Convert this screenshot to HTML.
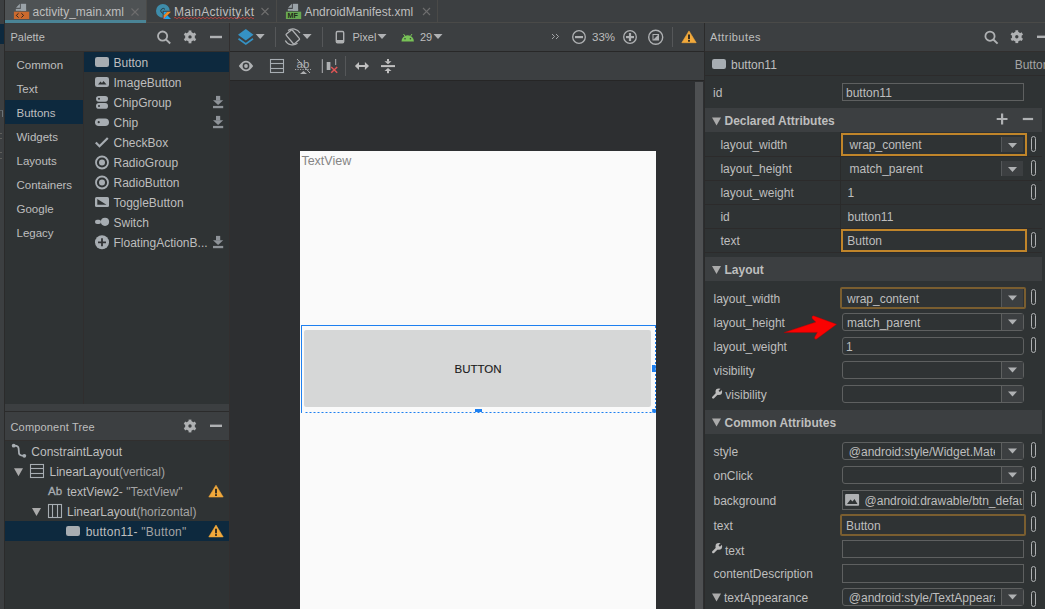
<!DOCTYPE html>
<html><head><meta charset="utf-8">
<style>
*{margin:0;padding:0;box-sizing:border-box}
html,body{width:1045px;height:609px;overflow:hidden;background:#2F3334;font-family:"Liberation Sans",sans-serif;font-size:12px;color:#BEBEBE}
.a{position:absolute}
.t{position:absolute;white-space:nowrap;line-height:1;font-size:12px}
.s{font-size:11px}
.g{color:#A4A4A4}
svg{position:absolute;overflow:visible}
.fld{position:absolute;border:1px solid #5E6060;border-radius:3px}
.sq{border-radius:0}
.org{position:absolute;border:2px solid #C0852A}
.dorg{position:absolute;border:2px solid #7A5E30;border-radius:2px}
.dd{position:absolute;width:22px;background:#3C3F41;border-left:1px solid #5E6060}
.pill{position:absolute;width:5px;height:16px;border:1.3px solid #AFB1B3;border-radius:3px;margin-top:-1px}
.ln{position:absolute;height:1px;background:#2C2B2B}
.clip{position:absolute;overflow:hidden;white-space:nowrap;line-height:14px;font-size:12px;margin-top:-1px}
</style></head><body>

<!-- left strip -->
<div class="a" style="left:0;top:0;width:4px;height:609px;background:#3C3F41"></div>
<div class="a" style="left:0;top:24px;width:4px;height:20px;background:#0D293E"></div>
<div class="a" style="left:4px;top:0;width:1px;height:609px;background:#2B2B2B"></div>
<div class="a" style="left:0;top:110px;width:3px;height:7px;border-right:1.5px solid #7F8A90;border-top:1px solid #6A7075;opacity:0.7"></div>
<div class="a" style="left:0;top:133px;width:2px;height:6px;border-top:1px solid #77756F;border-bottom:1.5px solid #77756F;opacity:0.6"></div>
<div class="a" style="left:0;top:152px;width:2px;height:7px;border-top:1px solid #77756F;border-bottom:1.5px solid #77756F;opacity:0.6"></div>

<!-- tab bar -->
<div class="a" style="left:5px;top:0;width:1040px;height:23px;background:#3C3F41;border-bottom:1px solid #4A4A48"></div>
<div class="a" style="left:5px;top:0;width:141px;height:23px;background:#4E5254"></div>
<div class="a" style="left:5px;top:20px;width:141px;height:3px;background:#4A8496"></div>
<div class="a" style="left:146px;top:0;width:1px;height:23px;background:#4A4A48"></div>
<div class="a" style="left:276px;top:0;width:1px;height:23px;background:#4A4A48"></div>
<div class="a" style="left:437px;top:0;width:1px;height:23px;background:#4A4A48"></div>
<div class="t" style="left:32.5px;top:5.7px">activity_main.xml</div>
<div class="t" style="left:174px;top:5.7px;letter-spacing:0.3px">MainActivity.kt</div>
<div class="t" style="left:304.4px;top:5.7px">AndroidManifest.xml</div>

<!-- palette -->
<div class="a" style="left:5px;top:23px;width:224px;height:28px;background:#3C3F41"></div>
<div class="t s" style="left:10.5px;top:32.4px">Palette</div>
<div class="a" style="left:5px;top:51px;width:224px;height:1px;background:#312F2E"></div>
<div class="a" style="left:705px;top:51px;width:340px;height:1px;background:#312F2E"></div>
<div class="a" style="left:5px;top:440px;width:224px;height:1px;background:#312F2E"></div>
<div class="a" style="left:229px;top:23px;width:1px;height:586px;background:#322F2F"></div>
<div class="a" style="left:83px;top:52px;width:1px;height:352px;background:#302E2E"></div>
<div class="a" style="left:5px;top:100px;width:78px;height:24px;background:#0D293E"></div>
<div class="a" style="left:84px;top:52px;width:145px;height:20px;background:#0D293E"></div>

<div class="t" style="left:16.5px;top:59.5px;font-size:11.5px">Common</div>
<div class="t" style="left:16.5px;top:83.5px;font-size:11.5px">Text</div>
<div class="t" style="left:16.5px;top:107.8px;font-size:11.5px">Buttons</div>
<div class="t" style="left:16.5px;top:131.5px;font-size:11.5px">Widgets</div>
<div class="t" style="left:16.5px;top:155.5px;font-size:11.5px">Layouts</div>
<div class="t" style="left:16.5px;top:179.5px;font-size:11.5px">Containers</div>
<div class="t" style="left:16.5px;top:203.5px;font-size:11.5px">Google</div>
<div class="t" style="left:16.5px;top:227.5px;font-size:11.5px">Legacy</div>

<div class="t" style="left:113.5px;top:56.8px">Button</div>
<div class="t" style="left:113.5px;top:76.8px">ImageButton</div>
<div class="t" style="left:113.5px;top:96.8px">ChipGroup</div>
<div class="t" style="left:113.5px;top:116.8px">Chip</div>
<div class="t" style="left:113.5px;top:136.8px">CheckBox</div>
<div class="t" style="left:113.5px;top:156.8px">RadioGroup</div>
<div class="t" style="left:113.5px;top:176.8px">RadioButton</div>
<div class="t" style="left:113.5px;top:196.8px">ToggleButton</div>
<div class="t" style="left:113.5px;top:216.8px">Switch</div>
<div class="t" style="left:113.5px;top:236.8px">FloatingActionB...</div>

<!-- component tree -->
<div class="a" style="left:5px;top:404px;width:224px;height:7px;background:#3C3F41"></div>
<div class="a" style="left:5px;top:411px;width:224px;height:1px;background:#2B2B2B"></div>
<div class="a" style="left:5px;top:412px;width:224px;height:28px;background:#3C3F41"></div>
<div class="t s" style="left:10.5px;top:421.6px;letter-spacing:0.17px">Component Tree</div>
<div class="a" style="left:5px;top:521px;width:224px;height:20px;background:#0D293E"></div>
<div class="t" style="left:31.3px;top:446.3px">ConstraintLayout</div>
<div class="t" style="left:49.5px;top:466.2px">LinearLayout<span class="g">(vertical)</span></div>
<div class="t" style="left:67px;top:486px">textView2- <span class="g">"TextView"</span></div>
<div class="t" style="left:67px;top:506px">LinearLayout<span class="g">(horizontal)</span></div>
<div class="t" style="left:85.7px;top:525.7px;letter-spacing:0.25px">button11- <span class="g">"Button"</span></div>

<!-- design toolbar -->
<div class="a" style="left:230px;top:23px;width:474px;height:29px;background:#3C3F41;border-bottom:1px solid #282828"></div>
<div class="a" style="left:230px;top:52px;width:474px;height:29px;background:#3C3F41;border-bottom:1px solid #262626"></div>
<div class="a" style="left:230px;top:81px;width:474px;height:528px;background:#2D2F31"></div>
<div class="a" style="left:695px;top:82px;width:8px;height:527px;background:#4E5052"></div>
<div class="a" style="left:704px;top:23px;width:1px;height:586px;background:#2B2B2B"></div>
<div class="t s" style="left:352.5px;top:32.3px">Pixel</div>
<div class="t s" style="left:420px;top:32.3px">29</div>
<div class="t" style="left:592px;top:32px;font-size:11.5px">33%</div>

<!-- phone -->
<div class="a" style="left:300px;top:151px;width:356px;height:458px;background:#FAFAFA"></div>
<div class="t" style="left:301.4px;top:155px;font-size:12.5px;color:#858585">TextView</div>
<svg width="1045" height="609" style="left:0;top:0">
<line x1="301" y1="325.5" x2="656" y2="325.5" stroke="#1E80F0" stroke-width="1"/>
<line x1="301.5" y1="325" x2="301.5" y2="413" stroke="#1E80F0" stroke-width="1"/>
<line x1="655.5" y1="326" x2="655.5" y2="413" stroke="#1E80F0" stroke-width="1" stroke-dasharray="2,2"/>
<line x1="305.5" y1="412.5" x2="656" y2="412.5" stroke="#1E80F0" stroke-width="1" stroke-dasharray="2,2"/>
<rect x="652" y="365" width="3.7" height="7" fill="#1E80F0"/>
<rect x="475" y="409" width="7" height="3" fill="#1E80F0"/>
<rect x="652.2" y="409" width="3.5" height="3.6" fill="#1E80F0"/>
</svg>
<div class="a" style="left:304px;top:330px;width:347px;height:77px;background:#D6D7D7;border-radius:2px"></div>
<div class="t" style="left:454.5px;top:364.2px;font-size:11.5px;color:#1A1A1A;-webkit-text-stroke:0.1px #1A1A1A">BUTTON</div>

<!-- attributes -->
<div class="a" style="left:705px;top:23px;width:340px;height:28px;background:#3C3F41"></div>
<div class="t s" style="left:710px;top:32.4px;letter-spacing:0.45px">Attributes</div>
<div class="ln" style="left:705px;top:75px;width:340px"></div>
<div class="t" style="left:731px;top:58.5px">button11</div>
<div class="t g" style="left:1014.7px;top:58.5px">Button</div>
<div class="t" style="left:713px;top:87px">id</div>
<div class="fld sq" style="left:842px;top:83px;width:182px;height:18px"></div>
<div class="t" style="left:846px;top:87px">button11</div>

<!-- declared attributes -->
<div class="a" style="left:705px;top:108px;width:337px;height:24px;background:#3C3F41"></div>
<div class="t" style="left:724.5px;top:114.5px;font-weight:bold">Declared Attributes</div>
<div class="ln" style="left:705px;top:156px;width:337px"></div>
<div class="ln" style="left:705px;top:180px;width:337px"></div>
<div class="ln" style="left:705px;top:204px;width:337px"></div>
<div class="ln" style="left:705px;top:228px;width:337px"></div>
<div class="ln" style="left:705px;top:252px;width:337px"></div>
<div class="a" style="left:840px;top:132px;width:1px;height:120px;background:#2A2B2B"></div>
<div class="t" style="left:720.4px;top:139px">layout_width</div>
<div class="t" style="left:720.4px;top:163px">layout_height</div>
<div class="t" style="left:720.4px;top:187px">layout_weight</div>
<div class="t" style="left:720.4px;top:211px">id</div>
<div class="t" style="left:720.4px;top:235px">text</div>

<div class="org" style="left:841px;top:133px;width:186px;height:23px"></div>
<div class="dd" style="left:1001px;top:137px;height:15px;border-left-color:#55585A"></div>
<div class="t" style="left:849.5px;top:138.5px">wrap_content</div>
<div class="dd" style="left:1001px;top:161px;height:15px;border-left-color:#55585A"></div>
<div class="t" style="left:849.5px;top:162.5px">match_parent</div>
<div class="t" style="left:847.5px;top:186.5px">1</div>
<div class="t" style="left:847.5px;top:210.5px">button11</div>
<div class="org" style="left:841px;top:229px;width:186px;height:23px"></div>
<div class="t" style="left:847.3px;top:234.8px">Button</div>
<div class="pill" style="left:1031px;top:137px"></div>
<div class="pill" style="left:1031px;top:161px"></div>
<div class="pill" style="left:1031px;top:185px"></div>
<div class="pill" style="left:1031px;top:233px"></div>

<!-- gap + layout -->
<div class="a" style="left:705px;top:257px;width:337px;height:24px;background:#3C3F41"></div>
<div class="t" style="left:724.5px;top:263.5px;font-weight:bold">Layout</div>

<div class="t" style="left:713.5px;top:292.8px">layout_width</div>
<div class="t" style="left:713.5px;top:316.8px">layout_height</div>
<div class="t" style="left:713.5px;top:340.8px">layout_weight</div>
<div class="t" style="left:713.5px;top:364.8px">visibility</div>
<div class="t" style="left:725.3px;top:388.8px">visibility</div>

<div class="dorg" style="left:840px;top:287px;width:186px;height:22px"></div>
<div class="dd" style="left:1001px;top:289px;height:18px;border-left-color:#55585A"></div>
<div class="t" style="left:847px;top:292.8px">wrap_content</div>
<div class="fld" style="left:842px;top:313px;width:182px;height:18px"></div>
<div class="dd" style="left:1001px;top:314px;height:16px"></div>
<div class="t" style="left:847px;top:316.8px">match_parent</div>
<div class="fld" style="left:842px;top:337px;width:182px;height:18px"></div>
<div class="t" style="left:846px;top:340.8px">1</div>
<div class="fld" style="left:842px;top:361px;width:182px;height:18px"></div>
<div class="dd" style="left:1001px;top:362px;height:16px"></div>
<div class="fld" style="left:842px;top:385px;width:182px;height:18px"></div>
<div class="dd" style="left:1001px;top:386px;height:16px"></div>
<div class="pill" style="left:1031px;top:290px"></div>
<div class="pill" style="left:1031px;top:314px"></div>
<div class="pill" style="left:1031px;top:338px"></div>

<!-- common attributes -->
<div class="a" style="left:705px;top:410px;width:337px;height:24px;background:#3C3F41"></div>
<div class="t" style="left:724.5px;top:416.5px;font-weight:bold">Common Attributes</div>

<div class="t" style="left:713.5px;top:445.5px">style</div>
<div class="t" style="left:713.5px;top:469.5px">onClick</div>
<div class="t" style="left:713.5px;top:494.5px">background</div>
<div class="t" style="left:713.5px;top:520.2px">text</div>
<div class="t" style="left:725px;top:544.6px">text</div>
<div class="t" style="left:713.5px;top:568.2px">contentDescription</div>
<div class="t" style="left:724px;top:592.1px">textAppearance</div>

<div class="fld" style="left:842px;top:442px;width:182px;height:18px"></div>
<div class="dd" style="left:1001px;top:443px;height:16px"></div>
<div class="clip" style="left:848.8px;top:445.5px;width:146px">@android:style/Widget.MaterialComponents</div>
<div class="fld" style="left:842px;top:466px;width:182px;height:18px"></div>
<div class="dd" style="left:1001px;top:467px;height:16px"></div>
<div class="fld sq" style="left:842px;top:490px;width:182px;height:20px"></div>
<div class="clip" style="left:864.6px;top:495.2px;width:157px">@android:drawable/btn_default</div>
<div class="dorg" style="left:840px;top:514px;width:186px;height:22px"></div>
<div class="t" style="left:846px;top:520.2px">Button</div>
<div class="fld sq" style="left:842px;top:540px;width:182px;height:18px"></div>
<div class="fld sq" style="left:842px;top:564px;width:182px;height:19px"></div>
<div class="fld" style="left:842px;top:588px;width:182px;height:18px"></div>
<div class="dd" style="left:1001px;top:589px;height:16px"></div>
<div class="clip" style="left:848.8px;top:592.1px;width:146px">@android:style/TextAppearance</div>
<div class="pill" style="left:1031px;top:443px"></div>
<div class="pill" style="left:1031px;top:467px"></div>
<div class="pill" style="left:1031px;top:492px"></div>
<div class="pill" style="left:1031px;top:517px"></div>
<div class="pill" style="left:1031px;top:542px"></div>
<div class="pill" style="left:1031px;top:567px"></div>
<div class="pill" style="left:1031px;top:592px"></div>

<!-- ICONS -->
<svg width="1045" height="609" style="left:0;top:0">
<defs>
<g id="gear"><circle cx="0" cy="0" r="3.3" fill="none" stroke="#AFB1B3" stroke-width="3.2"/><g stroke="#AFB1B3" stroke-width="2.8"><line x1="0" y1="4" x2="0" y2="6.4"/><line x1="-3.46" y1="2" x2="-5.54" y2="3.2"/><line x1="-3.46" y1="-2" x2="-5.54" y2="-3.2"/><line x1="0" y1="-4" x2="0" y2="-6.4"/><line x1="3.46" y1="-2" x2="5.54" y2="-3.2"/><line x1="3.46" y1="2" x2="5.54" y2="3.2"/></g></g>
<g id="search"><circle cx="0" cy="0" r="4.6" fill="none" stroke="#AFB1B3" stroke-width="1.8"/><line x1="3.3" y1="3.3" x2="7.6" y2="7.4" stroke="#AFB1B3" stroke-width="2"/></g>
<g id="minus"><rect x="0" y="-1.2" width="12" height="2.4" fill="#AFB1B3"/></g>
<g id="dl" fill="#8E9398"><rect x="3" y="0" width="4.2" height="4.5"/><polygon points="0,4.3 10.2,4.3 5.1,9"/><rect x="0" y="10" width="10.2" height="2.3"/></g>
<g id="warn"><polygon points="7.2,0 14.4,11.8 0,11.8" fill="#F2A93B" stroke="#F2A93B" stroke-width="0.6" stroke-linejoin="round"/><rect x="6.2" y="3.6" width="2" height="4.6" fill="#3A3020"/><rect x="6.2" y="9" width="2" height="1.8" fill="#3A3020"/></g>
<g id="btn"><rect x="0" y="0" width="14" height="10" rx="2.2" fill="#A7ADB2"/></g>
<g id="tri"><polygon points="0,0 9,0 4.5,5" fill="#AFB1B3"/></g>
<g id="htri"><polygon points="0,0 9,0 4.5,8" fill="#ABABAB"/></g>
<g id="wrench"><circle cx="6.8" cy="3.1" r="3.3" fill="#BDBDBD"/><line x1="6.5" y1="3.5" x2="1.2" y2="8.8" stroke="#BDBDBD" stroke-width="2.4" stroke-linecap="round"/><line x1="7.2" y1="2.7" x2="10" y2="-0.1" stroke="#313335" stroke-width="2"/></g>
</defs>

<!-- tab icons -->
<g fill="#9AA2A8"><rect x="20.8" y="3.8" width="5.3" height="7"/><rect x="15.8" y="8.9" width="10.3" height="1.9"/><polygon points="16,7.8 19.9,3.8 19.9,7.8"/></g>
<rect x="13.9" y="11.7" width="15.3" height="7.3" fill="#CB6A2E"/>
<path d="M18.5,13.3 L16.3,15.4 L18.5,17.6 M21.4,13.3 L23.6,15.4 L21.4,17.6" stroke="#2E2520" stroke-width="1" fill="none"/>
<g stroke="#6E6E6E" stroke-width="1.1"><line x1="131.5" y1="8.5" x2="138.5" y2="15.5"/><line x1="138.5" y1="8.5" x2="131.5" y2="15.5"/></g>

<circle cx="162.9" cy="10.9" r="6.9" fill="#3E8CAA"/>
<path d="M165,9.3 A2.4,2.4 0 1 0 165,12.5" stroke="#26343A" stroke-width="0.9" fill="none"/>
<rect x="162.7" y="10.8" width="9.2" height="9.2" fill="#3C3F41"/>
<polygon points="163.7,11.8 167.4,11.8 163.7,15.4" fill="#1EA5F0"/>
<polygon points="167.4,11.8 171,11.8 163.7,18.9 163.7,15.4" fill="#F08A24"/>
<polygon points="163.7,18.9 167.3,15.3 171,18.9" fill="#1EA5F0"/>
<polygon points="163.7,18.9 163.7,16.5 165,17.6" fill="#D0609A"/>
<path d="M174,18 q1,-1.5 2,0 t2,0 t2,0 t2,0 t2,0 t2,0 t2,0 t2,0 t2,0 t2,0 t2,0 t2,0 t2,0 t2,0 t2,0 t2,0 t2,0 t2,0 t2,0 t2,0 t2,0 t2,0 t2,0 t2,0 t2,0 t2,0 t2,0 t2,0 t2,0 t2,0 t2,0 t2,0 t2,0 t2,0 t2,0 t2,0 t2,0 t2,0 t2,0 t2,0" stroke="#BC3F3C" stroke-width="0.9" fill="none"/>
<g stroke="#6E6E6E" stroke-width="1.1"><line x1="261.5" y1="8" x2="268.5" y2="15"/><line x1="268.5" y1="8" x2="261.5" y2="15"/></g>

<g fill="#9AA2A8"><rect x="292.8" y="3.8" width="5.3" height="7"/><rect x="287.8" y="8.9" width="10.3" height="1.9"/><polygon points="288,7.8 291.9,3.8 291.9,7.8"/></g>
<rect x="285.9" y="11.7" width="15.3" height="7.3" fill="#67A853"/>
<text x="287.6" y="18.3" font-family="Liberation Sans" font-size="7.2" fill="#1F2A1A" font-weight="bold">MF</text>
<g stroke="#6E6E6E" stroke-width="1.1"><line x1="423" y1="8" x2="430" y2="15"/><line x1="430" y1="8" x2="423" y2="15"/></g>

<!-- panel headers -->
<use href="#search" x="162.6" y="36.1"/>
<use href="#gear" x="190" y="36.9"/>
<use href="#minus" x="210" y="37"/>
<use href="#gear" x="190" y="426"/>
<use href="#minus" x="210" y="425.8"/>
<use href="#search" x="990" y="36.2"/>
<use href="#gear" x="1016.8" y="36.7"/>
<use href="#minus" x="1037" y="36.8"/>

<!-- palette icons -->
<use href="#btn" x="95" y="57"/>
<rect x="95" y="77" width="14" height="10" rx="2.2" fill="#A7ADB2"/>
<polygon points="98,84.5 100.5,81.5 102,83 103.5,81 106.5,84.5" fill="#2F3334"/>
<rect x="96" y="96" width="12" height="5.7" rx="2.85" fill="#A7ADB2"/>
<rect x="96" y="103" width="12" height="5.8" rx="2.9" fill="#A7ADB2"/>
<circle cx="99" cy="98.8" r="1" fill="#2F3334"/><circle cx="99" cy="105.9" r="1" fill="#2F3334"/>
<rect x="95" y="118.4" width="14" height="7.6" rx="3.8" fill="#A7ADB2"/>
<circle cx="98.7" cy="122.2" r="1.1" fill="#2F3334"/>
<path d="M95.8,142.5 L99.5,146.3 L107.8,138" stroke="#A7ADB2" stroke-width="2.2" fill="none"/>
<circle cx="102" cy="162.5" r="6" fill="none" stroke="#A7ADB2" stroke-width="1.8"/><circle cx="102" cy="162.5" r="3" fill="#A7ADB2"/>
<circle cx="102" cy="182.5" r="6" fill="none" stroke="#A7ADB2" stroke-width="1.8"/><circle cx="102" cy="182.5" r="3" fill="#A7ADB2"/>
<rect x="95" y="197" width="14" height="10" rx="1.5" fill="#A7ADB2"/>
<polygon points="97.3,199 97.3,204.8 106.5,204.8" fill="#2F3334"/>
<rect x="95" y="219.7" width="6" height="4.2" rx="2" fill="#A7ADB2"/>
<circle cx="105" cy="221.8" r="4.1" fill="#A7ADB2"/>
<circle cx="102" cy="242.3" r="7" fill="#A7ADB2"/>
<path d="M102,238.3 V246.3 M98,242.3 H106" stroke="#313335" stroke-width="1.8"/>
<use href="#dl" x="213" y="95.9"/>
<use href="#dl" x="213" y="115.9"/>
<use href="#dl" x="213" y="235.9"/>

<!-- component tree icons -->
<path d="M13.7,445.7 C18.5,445.7 18.8,447 18.8,450.7 C18.8,454.5 19.2,455.8 24.3,455.8" stroke="#A7ADB2" stroke-width="1.8" fill="none"/>
<circle cx="13.7" cy="445.7" r="1.9" fill="#A7ADB2"/><circle cx="24.3" cy="455.8" r="1.9" fill="#A7ADB2"/>
<use href="#htri" x="14" y="468.2"/>
<rect x="30.5" y="464.5" width="13" height="13" fill="none" stroke="#A7ADB2" stroke-width="1.1"/>
<line x1="30.5" y1="468.5" x2="43.5" y2="468.5" stroke="#A7ADB2" stroke-width="1.1"/>
<line x1="30.5" y1="473.5" x2="43.5" y2="473.5" stroke="#A7ADB2" stroke-width="1.1"/>
<text x="48" y="495" font-family="Liberation Sans" font-size="11.5" fill="#A7ADB2" stroke="#A7ADB2" stroke-width="0.3">Ab</text>
<use href="#htri" x="32" y="508"/>
<rect x="48.5" y="504.5" width="13" height="13" fill="none" stroke="#A7ADB2" stroke-width="1.1"/>
<line x1="52.5" y1="504.5" x2="52.5" y2="517.5" stroke="#A7ADB2" stroke-width="1.1"/>
<line x1="57.5" y1="504.5" x2="57.5" y2="517.5" stroke="#A7ADB2" stroke-width="1.1"/>
<use href="#btn" x="66" y="526"/>
<use href="#warn" x="208.8" y="485.2"/>
<use href="#warn" x="208.8" y="525.1"/>

<!-- toolbar row 1 -->
<polygon points="238,34.8 245.8,29 253.5,34.8 245.8,40.4" fill="#3592C4"/>
<path d="M238.5,38.8 L245.8,44 L253,38.8" stroke="#3592C4" stroke-width="1.7" fill="none"/>
<use href="#tri" x="255.7" y="33.9"/>
<rect x="275" y="27" width="1" height="20" fill="#555759"/>
<g transform="translate(292.8,36.9) rotate(-40)">
<rect x="-4" y="-6.3" width="8" height="12.6" rx="1" fill="none" stroke="#AFB1B3" stroke-width="1.3"/>
</g>
<path d="M288,30.5 A8.2,8.2 0 0 1 300,33" stroke="#AFB1B3" stroke-width="1.2" fill="none"/>
<path d="M297.5,43.3 A8.2,8.2 0 0 1 285.3,40.5" stroke="#AFB1B3" stroke-width="1.2" fill="none"/>
<use href="#tri" x="302.6" y="33.9"/>
<rect x="322" y="27" width="1" height="20" fill="#555759"/>
<rect x="336.3" y="31.5" width="7.4" height="11.2" rx="1.2" fill="none" stroke="#AFB1B3" stroke-width="1.4"/>
<rect x="336.3" y="40" width="7.4" height="2.7" fill="#AFB1B3"/>
<use href="#tri" x="377.5" y="34"/>
<path d="M401.5,41.4 A6.2,6.2 0 0 1 413.9,41.4 Z" fill="#78C257"/>
<line x1="403.5" y1="34" x2="405" y2="36.2" stroke="#78C257" stroke-width="1"/>
<line x1="412" y1="34" x2="410.5" y2="36.2" stroke="#78C257" stroke-width="1"/>
<circle cx="405" cy="38.7" r="0.8" fill="#3C3F41"/><circle cx="410.4" cy="38.7" r="0.8" fill="#3C3F41"/>
<use href="#tri" x="433.5" y="34"/>
<path d="M552,34 L554.5,36.5 L552,39 M556,34 L558.5,36.5 L556,39" stroke="#AFB1B3" stroke-width="0.9" fill="none"/>
<circle cx="579" cy="37" r="6.3" fill="none" stroke="#AFB1B3" stroke-width="1.3"/>
<rect x="575" y="36" width="8" height="2.2" fill="#AFB1B3"/>
<circle cx="630" cy="37" r="6.3" fill="none" stroke="#AFB1B3" stroke-width="1.3"/>
<rect x="626" y="36" width="8" height="2.2" fill="#AFB1B3"/><rect x="628.9" y="33" width="2.2" height="8" fill="#AFB1B3"/>
<circle cx="655.7" cy="37.2" r="7" fill="none" stroke="#AFB1B3" stroke-width="1.4"/>
<rect x="652.5" y="34" width="6.5" height="6.5" fill="#AFB1B3"/>
<polygon points="653.5,35 658,35 653.5,39.5" fill="#3C3F41"/>
<rect x="672" y="27" width="1" height="20" fill="#555759"/>
<use href="#warn" x="681.8" y="30.9"/>

<!-- toolbar row 2 -->
<path d="M238.8,66 Q246,55.5 253.2,66 Q246,76.5 238.8,66 Z" fill="#AFB1B3"/>
<circle cx="246" cy="66" r="3.4" fill="#3C3F41"/><circle cx="246" cy="66" r="1.9" fill="#AFB1B3"/>
<rect x="270.5" y="59.5" width="13" height="13" fill="none" stroke="#A7ADB2" stroke-width="1.1"/>
<line x1="270.5" y1="63.5" x2="283.5" y2="63.5" stroke="#A7ADB2" stroke-width="1.1"/>
<line x1="270.5" y1="68.5" x2="283.5" y2="68.5" stroke="#A7ADB2" stroke-width="1.1"/>
<text x="296.5" y="68.3" font-family="Liberation Sans" font-size="11.5" fill="#AFB1B3">ab</text>
<line x1="295" y1="69.5" x2="311" y2="69.5" stroke="#AFB1B3" stroke-width="0.9" stroke-dasharray="1.2,1.3"/>
<polygon points="300,74 303.5,71 307,74" fill="#AFB1B3"/>
<line x1="297" y1="59" x2="310" y2="73" stroke="#AFB1B3" stroke-width="1"/>
<line x1="322.3" y1="59.2" x2="322.3" y2="73" stroke="#AFB1B3" stroke-width="1"/>
<rect x="326.7" y="62" width="3.7" height="8" fill="#AFB1B3"/>
<line x1="335.7" y1="59" x2="335.7" y2="65" stroke="#AFB1B3" stroke-width="1"/>
<path d="M331.2,67 L337.2,72.8 M337.2,67 L331.2,72.8" stroke="#E05555" stroke-width="1.5"/>
<rect x="345" y="56" width="1" height="20" fill="#555759"/>
<rect x="357" y="65" width="10" height="2" fill="#C0C0C0"/>
<polygon points="354.9,66 359,62 359,70" fill="#C0C0C0"/><polygon points="369,66 364.9,62 364.9,70" fill="#C0C0C0"/>
<rect x="381" y="65.1" width="14" height="2" fill="#C0C0C0"/>
<rect x="387" y="59" width="2" height="2.5" fill="#C0C0C0"/><polygon points="384.5,61.3 391.5,61.3 388,64.2" fill="#C0C0C0"/>
<rect x="387" y="70.6" width="2" height="2.6" fill="#C0C0C0"/><polygon points="384.5,71 391.5,71 388,68" fill="#C0C0C0"/>



<!-- attributes icons -->
<use href="#btn" x="712" y="59"/>
<use href="#htri" x="712" y="117.5"/>
<path d="M996.7,119 H1007.5 M1002.1,113.6 V124.4" stroke="#AFB1B3" stroke-width="2.2"/>
<rect x="1022.8" y="117.9" width="10.3" height="2.2" fill="#AFB1B3"/>
<use href="#htri" x="712" y="266"/>
<use href="#htri" x="712" y="418.5"/>
<use href="#htri" x="712" y="593.5"/>
<use href="#tri" x="1008" y="143"/>
<use href="#tri" x="1008" y="167"/>
<use href="#tri" x="1008" y="295.5"/>
<use href="#tri" x="1008" y="319.5"/>
<use href="#tri" x="1008" y="367.5"/>
<use href="#tri" x="1008" y="391.5"/>
<use href="#tri" x="1008" y="448.5"/>
<use href="#tri" x="1008" y="472.5"/>
<use href="#tri" x="1008" y="594.5"/>
<use href="#wrench" x="712" y="388.7"/>
<use href="#wrench" x="712" y="543.3"/>
<rect x="845.1" y="494.1" width="14" height="11.6" rx="1" fill="#AFB1B3"/>
<polygon points="847,504 850.5,499.5 852.5,501.5 854.5,499 857.5,504" fill="#2F3334"/>

<!-- red arrow -->
<path d="M784,332.6 L815.8,322.1 L812.2,318.6 Q811.2,316 813.6,315.8 L836.6,324.3 L816.6,339 Q814.3,339.8 814.6,337.3 L817.3,332.4 Z" fill="#FA0202" stroke="#B00000" stroke-width="0.4" stroke-linejoin="round"/>
</svg>

</body></html>
